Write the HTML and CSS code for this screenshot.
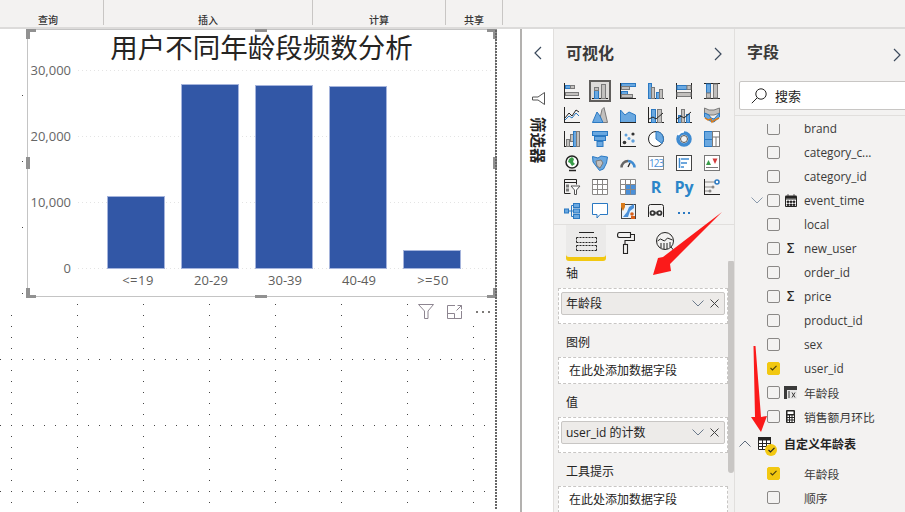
FILE: index.html
```html
<!DOCTYPE html>
<html lang="zh">
<head>
<meta charset="utf-8">
<title>Power BI</title>
<link rel="stylesheet" href="styles.css">
</head>
<body>
<header class="ribbon">
  <div class="group g-query"><span>查询</span></div>
  <div class="group g-insert"><span>插入</span></div>
  <div class="group g-calc"><span>计算</span></div>
  <div class="group g-share"><span>共享</span></div>
</header>
<main class="main">
  <section class="canvas">
    <svg class="dots" width="520" height="483">
      <defs>
        <pattern id="pv" width="66" height="11" patternUnits="userSpaceOnUse"><rect x="11" y="0" width="1" height="1" fill="#444"/></pattern>
        <pattern id="ph" width="11" height="66" patternUnits="userSpaceOnUse"><rect x="0" y="0" width="1" height="1" fill="#444"/></pattern>
      </defs>
      <rect x="60" y="275" width="420" height="208" fill="url(#pv)"/>
      <rect x="0" y="286" width="60" height="197" fill="url(#pv)"/>
      <rect x="22" y="320" width="463" height="163" fill="url(#ph)"/>
      <rect x="22" y="60" width="1" height="210" fill="url(#ph)"/>
      <rect x="0" y="330" width="1" height="1" fill="#444"/>
      <rect x="0" y="396" width="1" height="1" fill="#444"/>
      <rect x="0" y="462" width="1" height="1" fill="#444"/>
    </svg>
    <article class="visual">
      <h1 class="chart-title">用户不同年龄段频数分析</h1>
      <svg class="chart" viewBox="28 60 466 236" width="466" height="236">
        <g class="grid-lines">
          <line x1="78" x2="492" y1="70.5" y2="70.5"/>
          <line x1="78" x2="492" y1="136.5" y2="136.5"/>
          <line x1="78" x2="492" y1="202.5" y2="202.5"/>
          <line x1="78" x2="492" y1="268.5" y2="268.5"/>
        </g>
        <g class="y-labels">
          <text x="71" y="75">30,000</text>
          <text x="71" y="141">20,000</text>
          <text x="71" y="207">10,000</text>
          <text x="71" y="273">0</text>
        </g>
        <g class="bars">
          <rect x="107.5" y="196.5" width="57" height="72"/>
          <rect x="181.5" y="84.5" width="57" height="184"/>
          <rect x="255.5" y="85.5" width="57" height="183"/>
          <rect x="329.5" y="86.5" width="57" height="182"/>
          <rect x="403.5" y="250.5" width="57" height="18"/>
        </g>
        <g class="x-labels">
          <text class="wide" x="138" y="285">&lt;=19</text>
          <text x="211" y="285">20-29</text>
          <text x="285" y="285">30-39</text>
          <text x="359" y="285">40-49</text>
          <text class="wide" x="433" y="285">&gt;=50</text>
        </g>
      </svg>
      <i class="h corner tl"></i><i class="h corner tr"></i><i class="h corner bl"></i><i class="h corner br"></i>
      <i class="h mid-t"></i><i class="h mid-b"></i><i class="h mid-l"></i><i class="h mid-r"></i>
    </article>
    <div class="visual-tools">
      <svg width="16" height="15" viewBox="0 0 16 15"><path class="tool" d="M.5.5h15L10 7v7.5H6.500V7z"/></svg>
      <svg width="15" height="14" viewBox="0 0 15 14"><path class="tool" d="M8 .5H.5v13h14V6M.5 8.500h7v5M9.500 5.500l5-5M10.500.5h4v4"/></svg>
      <svg width="16" height="4" viewBox="0 0 16 4"><path d="M1 1h2v2H1zM7 1h2v2H7zM13 1h2v2h-2z" fill="#7d7a78"/></svg>
    </div>
    <div class="page-edge"></div>
  </section>

  <aside class="filter-strip">
    <svg class="chev-left" width="9" height="14" viewBox="0 0 9 14"><path d="M8 1L2 7l6 6" fill="none" stroke="#3b4a5c" stroke-width="1.200"/></svg>
    <svg class="strip-funnel" width="13" height="13" viewBox="0 0 13 13"><path d="M12.500.5v12L6 8H.5V5H6z" fill="none" stroke="#555" /></svg>
    <div class="strip-label">筛选器</div>
  </aside>

  <aside class="viz-pane">
    <div class="pane-head">
      <h2>可视化</h2>
      <svg width="9" height="14" viewBox="0 0 9 14"><path d="M1 1l6 6-6 6" fill="none" stroke="#3b4a5c" stroke-width="1.200"/></svg>
    </div>
    <div class="viz-grid">
      <!-- row 1 -->
      <span class="vi"><svg viewBox="0 0 16 16"><path class="k" d="M.5 0v16M0 15.500h16"/><rect class="b" x="1.500" y="2.500" width="5" height="3"/><rect class="g" x="6.500" y="2.500" width="4" height="3"/><rect class="g" x="1.500" y="9.500" width="13" height="3"/></svg></span>
      <span class="vi sel"><svg viewBox="0 0 16 16"><path class="k" d="M0 15.500h16"/><rect class="b" x="2.500" y="7.500" width="4" height="8"/><rect class="g" x="2.500" y="4.500" width="4" height="3"/><rect class="g" x="9.500" y="1.500" width="4" height="14"/></svg></span>
      <span class="vi"><svg viewBox="0 0 16 16"><path class="k" d="M.5 0v16M0 15.500h16"/><rect class="b" x="1.500" y=".5" width="14" height="3"/><rect class="g" x="1.500" y="3.500" width="8" height="3"/><rect class="b" x="1.500" y="8.500" width="6" height="3"/><rect class="g" x="1.500" y="11.500" width="11" height="3"/></svg></span>
      <span class="vi"><svg viewBox="0 0 16 16"><path class="k" d="M0 15.500h16"/><rect class="b" x=".5" y=".5" width="3" height="15"/><rect class="g" x="3.500" y="4.500" width="3" height="11"/><rect class="b" x="8.500" y="9.500" width="3" height="6"/><rect class="g" x="11.500" y="6.500" width="3" height="9"/></svg></span>
      <span class="vi"><svg viewBox="0 0 16 16"><path class="k" d="M.5 0v16M15.500 0v16"/><rect class="b" x="1" y="2.500" width="10" height="4"/><rect class="g" x="11" y="2.500" width="4" height="4"/><rect class="g" x="1" y="9.500" width="14" height="4"/></svg></span>
      <span class="vi"><svg viewBox="0 0 16 16"><path class="k" d="M0 .5h16M0 15.500h16"/><rect class="b" x="2.500" y="1" width="4" height="9"/><rect class="g" x="2.500" y="10" width="4" height="5"/><rect class="g" x="9.500" y="1" width="4" height="14"/></svg></span>
      <!-- row 2 -->
      <span class="vi"><svg viewBox="0 0 16 16"><path class="k" d="M.5 0v16M0 15.500h16"/><path class="k" d="M1 11l4-5 3 3 4-6 3 2"/><path class="bl" d="M1 13l4-4 3 2 4-5 3 3"/></svg></span>
      <span class="vi"><svg viewBox="0 0 16 16"><path class="g" d="M7 15.500l3-13 2-2 3.500 15z"/><path class="b" d="M.5 15.500L5 5l3 4 3 6.500z"/></svg></span>
      <span class="vi"><svg viewBox="0 0 16 16"><path class="b" d="M.5 3L5 8l4-3 6.500 3v7.500H.5z"/><path class="k" d="M0 15.500h16"/></svg></span>
      <span class="vi"><svg viewBox="0 0 16 16"><path class="k" d="M.5 0v16M0 15.500h16"/><rect class="b" x="3.500" y="2.500" width="4" height="13"/><rect class="g" x="9.500" y="2.500" width="4" height="13"/><path class="k" d="M1 12l4-2 3 2 7-6"/></svg></span>
      <span class="vi"><svg viewBox="0 0 16 16"><path class="k" d="M.5 0v16M0 15.500h16"/><rect class="b" x="2.500" y="8.500" width="3" height="7"/><rect class="g" x="5.500" y="2.500" width="3" height="13"/><rect class="b" x="10.500" y="7.500" width="3" height="8"/><path class="k" d="M1 12l4-3 3 2 7-6"/></svg></span>
      <span class="vi"><svg viewBox="0 0 16 16"><path class="g" d="M.5 1L5 3l5 0 5.500-2v5L10 8H5L.5 6z"/><path class="b" d="M.5 6l4.500 2 2 3 3 1 5.500-6v4L10 15 6 14 .5 10z"/><path d="M1 11l3 2 3-1 1 3 3-2 4-2" stroke="#d97b1a" stroke-width="1.500" fill="none"/></svg></span>
      <!-- row 3 -->
      <span class="vi"><svg viewBox="0 0 16 16"><path class="k" d="M.5 0v16M0 15.500h16"/><rect class="g" x="2.500" y="8.500" width="3" height="7"/><rect class="g" x="6.500" y="3.500" width="3" height="7"/><rect class="b" x="9.500" y=".5" width="3" height="15"/><rect class="g" x="12.500" y=".5" width="3" height="15"/></svg></span>
      <span class="vi"><svg viewBox="0 0 16 16"><rect class="b" x=".5" y=".5" width="15" height="4"/><rect class="b" x="2.500" y="5.500" width="11" height="4"/><rect class="b" x="5" y="10.500" width="6" height="5"/></svg></span>
      <span class="vi"><svg viewBox="0 0 16 16"><path class="k" d="M.5 0v16M0 15.500h16"/><circle cx="6" cy="4" r="1.500" fill="#5ea0dc"/><circle cx="13" cy="3" r="1.600" fill="#333"/><circle cx="4.500" cy="11.500" r="1.800" fill="#333"/><circle cx="9" cy="7.500" r="1.500" fill="#5ea0dc"/><circle cx="13" cy="10" r="1.700" fill="#5ea0dc"/></svg></span>
      <span class="vi"><svg viewBox="0 0 16 16"><circle cx="8" cy="8" r="7.500" fill="#fff" stroke="#252423"/><path class="b" d="M8 .5A7.500 7.500 0 0 1 14 12.500L8 8z"/></svg></span>
      <span class="vi"><svg viewBox="0 0 16 16"><circle cx="8" cy="8" r="6" fill="none" stroke="#3f8bd1" stroke-width="3.500"/><path d="M8 .5A7.500 7.500 0 0 0 2 4" fill="none" stroke="#fff" stroke-width="2"/><circle cx="8" cy="8" r="3.500" fill="#f3f2f1" stroke="#555"/></svg></span>
      <span class="vi"><svg viewBox="0 0 16 16"><rect class="b" x=".5" y=".5" width="8" height="8"/><rect class="b" x=".5" y="8.500" width="8" height="7"/><rect x="8.500" y=".5" width="7" height="15" fill="#fff" stroke="#7a7a7a"/><path d="M8.500 6h7M12 6v9.500" stroke="#7a7a7a" fill="none"/></svg></span>
      <!-- row 4 -->
      <span class="vi"><svg viewBox="0 0 16 16"><circle cx="8" cy="7" r="6" fill="#fff" stroke="#252423" stroke-width="1.500"/><path d="M5 4l3-2 2 2-1 3 2 2-3 2-2-3-2-1z" fill="#3a9d4a"/><path d="M5 15.500h7" stroke="#252423" stroke-width="1.500"/></svg></span>
      <span class="vi"><svg viewBox="0 0 16 16"><path class="b" d="M.5 1.500L6 3l3-2 6.500 1-1 6-3 6-4 1.500L4 11 1 7z"/><path class="g" d="M4 6l5-1 2 3-3 5-3-2z"/></svg></span>
      <span class="vi"><svg viewBox="0 0 16 16"><path d="M1.500 12.500A6.500 6.500 0 0 1 8 6" fill="none" stroke="#666" stroke-width="2.500"/><path d="M8 6a6.500 6.500 0 0 1 6.500 6.500" fill="none" stroke="#3f8bd1" stroke-width="2.500"/><path d="M8 12l2-4" stroke="#252423" stroke-width="1.200"/></svg></span>
      <span class="vi card"><b>123</b></span>
      <span class="vi"><svg viewBox="0 0 16 16"><rect x=".5" y=".5" width="15" height="15" fill="#fff" stroke="#444"/><path d="M3.500 3v10" stroke="#3f8bd1" stroke-width="1.500"/><path d="M5 4h8M5 8h6M5 12h3" stroke="#3f8bd1" stroke-width="1.500"/></svg></span>
      <span class="vi"><svg viewBox="0 0 16 16"><rect x=".5" y=".5" width="15" height="15" fill="#fff" stroke="#777"/><path d="M2 10l2.500-5L7 10z" fill="#3a9d4a"/><path d="M8.500 3.500h5L11 9z" fill="#d23c3c"/><path d="M2 12.500h12" stroke="#777"/></svg></span>
      <!-- row 5 -->
      <span class="vi"><svg viewBox="0 0 16 16"><path class="k" d="M.5 14.500V.5h12v5M.5 3.500h12M.5 14.500h6"/><rect class="g" x="2.500" y="6" width="2" height="2"/><rect class="g" x="2.500" y="10" width="2" height="2"/><path d="M7 7h9l-3.500 4v4.500h-2V11z" fill="#fff" stroke="#555"/></svg></span>
      <span class="vi"><svg viewBox="0 0 16 16"><path d="M.5.5h15v15H.5zM.5 5.500h15M.5 10.500h15M5.500.5v15M10.500.5v15" fill="#fff" stroke="#8a8886"/><path d="M.5 .5h15" stroke="#555"/></svg></span>
      <span class="vi"><svg viewBox="0 0 16 16"><path d="M.5.5h15v15H.5z" fill="#fff" stroke="#8a8886"/><rect x="5.500" y="5.500" width="10" height="10" fill="#4a90d9"/><path d="M.5 5.500h15M.5 10.500h15M5.500.5v15M10.500.5v15" fill="none" stroke="#8a8886"/></svg></span>
      <span class="vi txt"><b>R</b></span>
      <span class="vi txt py"><b>Py</b></span>
      <span class="vi"><svg viewBox="0 0 16 16"><path class="k" d="M.5 0v16M0 15.500h16"/><path d="M1 3h11M1 8h7M1 12h4" stroke="#8a8886" fill="none"/><circle cx="13" cy="3" r="2" fill="#fff" stroke="#2b79c2" stroke-width="1.500"/><circle cx="9" cy="8" r="1.500" fill="#8a8886"/><circle cx="6" cy="12" r="1.500" fill="#8a8886"/></svg></span>
      <!-- row 6 -->
      <span class="vi"><svg viewBox="0 0 16 16"><rect class="b" x=".5" y="6" width="4" height="4"/><rect class="b" x="9.500" y=".5" width="6" height="4"/><rect class="b" x="9.500" y="6" width="6" height="4"/><rect class="b" x="9.500" y="11.500" width="6" height="4"/><path d="M4.500 8h5M7.500 2.500v11h2M7.500 2.500h2" stroke="#2b79c2" fill="none"/></svg></span>
      <span class="vi"><svg viewBox="0 0 16 16"><path d="M.5 .5h15v11H8l-3 3.500v-3.500H.5z" fill="#fff" stroke="#2b79c2"/></svg></span>
      <span class="vi"><svg viewBox="0 0 16 16"><rect x="1.500" y="1.500" width="14" height="14" fill="#eaf3fb" stroke="#444"/><path d="M3 14l4-5 2-5 5-3v4l-4 3-2 6z" fill="#4a90d9"/><path d="M1 0h4v4L3 8 1 4z" fill="#d97b1a"/><circle cx="12" cy="11" r="1.800" fill="#d9601a"/><rect x="11" y="13" width="4" height="3" fill="#d9601a"/></svg></span>
      <span class="vi"><svg viewBox="0 0 16 16"><path class="k" d="M.5 14V3.500q0-2 2-2h11q2 0 2 2V14"/><circle cx="4.500" cy="10" r="2" fill="none" stroke="#333" stroke-width="1.700"/><circle cx="11.500" cy="10" r="2" fill="none" stroke="#333" stroke-width="1.700"/><path d="M8 8l-1 2 1 2 1-2z" fill="#333"/></svg></span>
      <span class="vi"><svg viewBox="0 0 16 16"><path d="M2 9h2v2H2zM7 9h2v2H7zM12 9h2v2h-2z" fill="#2b79c2"/></svg></span>
    </div>
    <div class="format-tabs">
      <div class="tab on"><svg width="21" height="19" viewBox="0 0 21 19"><path d="M3 .5h15" stroke="#252423" fill="none"/><path d="M.5 5.500h20M.5 10.500h20M.5 5.500v5M20.500 5.500v5M.5 13.500h20M.5 18.500h20M.5 13.500v5M20.500 13.500v5" stroke="#252423" stroke-dasharray="2 1" fill="none"/></svg></div>
      <div class="tab"><svg width="18" height="22" viewBox="0 0 18 22"><path d="M.5 3.500q0-3 2-3h11v5h-11q-2 0-2-2zM13.500 2.500h4v6H8v4" fill="none" stroke="#252423" stroke-width="1.100"/><rect x="6.500" y="12.500" width="4" height="9" fill="none" stroke="#252423" stroke-width="1.100"/></svg></div>
      <div class="tab"><svg width="20" height="24" viewBox="0 0 20 24"><circle cx="9" cy="9" r="8.500" fill="#f3f2f1" stroke="#252423"/><path d="M1.500 9l3-2 4 2 3-3 5 2" fill="none" stroke="#252423"/><path d="M5 16v-5M8 17v-6M11 17v-6M14 15v-5M15 15l5 6" stroke="#252423" fill="none"/></svg></div>
    </div>
    <div class="wells">
      <section class="well-sec">
        <h3>轴</h3>
        <div class="well"><div class="pill"><span>年龄段</span>
          <svg class="pill-chev" width="12" height="7" viewBox="0 0 12 7"><path d="M.5.5L6 6l5.500-5.500" fill="none" stroke="#6b7a8c"/></svg>
          <svg class="pill-x" width="9" height="9" viewBox="0 0 9 9"><path d="M.5.5l8 8M8.500.5l-8 8" stroke="#444"/></svg>
        </div></div>
      </section>
      <section class="well-sec">
        <h3>图例</h3>
        <div class="well empty">在此处添加数据字段</div>
      </section>
      <section class="well-sec">
        <h3>值</h3>
        <div class="well"><div class="pill"><span>user_id 的计数</span>
          <svg class="pill-chev" width="12" height="7" viewBox="0 0 12 7"><path d="M.5.5L6 6l5.500-5.500" fill="none" stroke="#6b7a8c"/></svg>
          <svg class="pill-x" width="9" height="9" viewBox="0 0 9 9"><path d="M.5.5l8 8M8.500.5l-8 8" stroke="#444"/></svg>
        </div></div>
      </section>
      <section class="well-sec">
        <h3>工具提示</h3>
        <div class="well empty">在此处添加数据字段</div>
      </section>
      <div class="scroll-thumb"></div>
    </div>
  </aside>

  <aside class="fields-pane">
    <div class="pane-head fields-head">
      <h2>字段</h2>
      <svg width="9" height="14" viewBox="0 0 9 14"><path d="M1 1l6 6-6 6" fill="none" stroke="#3b4a5c" stroke-width="1.200"/></svg>
    </div>
    <div class="search">
      <svg width="16" height="16" viewBox="0 0 16 16"><circle cx="10" cy="6" r="5.200" fill="none" stroke="#252423"/><path d="M6.300 9.700L.8 15.200" stroke="#252423" fill="none"/></svg>
      <span>搜索</span>
    </div>
    <div class="field-list">
      <div class="row first"><i></i><i class="cb"></i><i></i><span>brand</span></div>
      <div class="row"><i></i><i class="cb"></i><i></i><span>category_c...</span></div>
      <div class="row"><i></i><i class="cb"></i><i></i><span>category_id</span></div>
      <div class="row"><svg class="chev" width="12" height="7" viewBox="0 0 12 7"><path d="M.5.5L6 6l5.500-5.500" fill="none" stroke="#8a9aac"/></svg><i class="cb"></i><svg class="fi" width="12" height="13" viewBox="0 0 12 13"><path d="M.5 2.500h11v10H.5zM.5 5h11" fill="#fff" stroke="#252423"/><path d="M.5 1.500h11v3H.5z" fill="#252423"/><path d="M3 0v2M9 0v2M2 7h2v1.500H2zM5 7h2v1.500H5zM8 7h2v1.500H8zM2 10h2v1.500H2zM5 10h2v1.500H5zM8 10h2v1.500H8z" stroke="#252423" stroke-width=".7" fill="#252423"/></svg><span>event_time</span></div>
      <div class="row"><i></i><i class="cb"></i><i></i><span>local</span></div>
      <div class="row"><i></i><i class="cb"></i><em class="sigma">Σ</em><span>new_user</span></div>
      <div class="row"><i></i><i class="cb"></i><i></i><span>order_id</span></div>
      <div class="row"><i></i><i class="cb"></i><em class="sigma">Σ</em><span>price</span></div>
      <div class="row"><i></i><i class="cb"></i><i></i><span>product_id</span></div>
      <div class="row"><i></i><i class="cb"></i><i></i><span>sex</span></div>
      <div class="row"><i></i><i class="cb on"><svg width="7" height="6" viewBox="0 0 7 6"><path d="M.5 3l2 2L6.500.8" fill="none" stroke="#4a3f10" stroke-width="1.100"/></svg></i><i></i><span>user_id</span></div>
      <div class="row"><i></i><i class="cb"></i><svg class="fi" width="13" height="13" viewBox="0 0 13 13"><rect width="13" height="13" fill="#3a3a3a"/><rect x="3" y="4" width="10" height="9" fill="#e8e8e8"/><path d="M5 5v7M8 6.500l3 5M11 6.500l-3 5" stroke="#3a3a3a" fill="none"/></svg><span>年龄段</span></div>
      <div class="row"><i></i><i class="cb"></i><svg class="fi" width="9" height="13" viewBox="0 0 9 13"><rect width="9" height="13" rx="1" fill="#252423"/><path d="M1.500 1.500h6v2.500h-6zM1.500 5.500h1.500V7H1.500zM4 5.500h1.500V7H4zM6.500 5.500H8V7H6.500zM1.500 8h1.500v1.500H1.500zM4 8h1.500v1.500H4zM6.500 8H8v1.500H6.500zM1.500 10.500h1.500V12H1.500zM4 10.500h1.500V12H4zM6.500 10.500H8V12H6.500z" fill="#fff"/></svg><span>销售额月环比</span></div>
      <div class="table-row">
        <svg width="12" height="7" viewBox="0 0 12 7"><path d="M.5 6.500L6 1l5.500 5.500" fill="none" stroke="#5c6a7c"/></svg>
        <span class="table-icon"><svg width="13" height="13" viewBox="0 0 13 13"><path d="M.5.5h12v12H.5z" fill="#fff" stroke="#252423"/><path d="M0 0h13v3.500H0z" fill="#252423"/><path d="M.5 6.500h12M.5 9.500h12M4.500 3v10M8.500 3v10" stroke="#252423" fill="none"/></svg><i class="badge"><svg width="7" height="6" viewBox="0 0 7 6"><path d="M.5 3l2 2L6.500.8" fill="none" stroke="#252423" stroke-width="1.200"/></svg></i></span>
        <strong>自定义年龄表</strong>
      </div>
      <div class="row gapped"><i></i><i class="cb on"><svg width="7" height="6" viewBox="0 0 7 6"><path d="M.5 3l2 2L6.500.8" fill="none" stroke="#4a3f10" stroke-width="1.100"/></svg></i><i></i><span>年龄段</span></div>
      <div class="row"><i></i><i class="cb"></i><i></i><span>顺序</span></div>
    </div>
  </aside>
</main>
<svg class="arrows" width="905" height="512" viewBox="0 0 905 512">
  <path d="M722 212L670 264l1 7-18 4 5-17 5-1z" fill="#fb1a1a"/>
  <path d="M753.500 346h2L761 417l6-1-6 16-10-15 4 0z" fill="#fb1a1a"/>
</svg>
</body>
</html>
```
FILE: styles.css
```css
* { box-sizing: border-box; }
html, body { margin: 0; padding: 0; }
body {
  width: 905px;
  height: 512px;
  overflow: hidden;
  position: relative;
  display: flex;
  flex-direction: column;
  background: #fff;
  color: #252423;
  font-family: "Open Sans", "Noto Sans CJK SC", sans-serif;
  font-size: 12px;
}
h1, h2, h3 { margin: 0; font-weight: normal; }
i, em { font-style: normal; display: block; }

/* ribbon */
.ribbon {
  flex: 0 0 29px;
  display: flex;
  background: #f3f2f1;
  border-bottom: 2px solid #dcdbda;
  overflow: hidden;
}
.group {
  height: 25px;
  border-right: 1px solid #c8c6c4;
  display: flex;
  justify-content: center;
  align-items: flex-end;
  font-size: 10px;
  line-height: 13px;
  color: #333;
  font-weight: 500;
}
.group span { position: relative; top: 2px; }
.g-query { width: 104px; padding-right: 7px; }
.g-insert { width: 209px; }
.g-calc { width: 133px; }
.g-share { width: 57px; }

/* layout */
.main { flex: 1; display: flex; min-height: 0; }

/* canvas */
.canvas { flex: 0 0 520px; position: relative; background: #fff; }
.dots { position: absolute; left: 0; top: 0; }
.visual {
  position: absolute;
  left: 27px;
  top: 0;
  width: 469px;
  height: 268px;
  background: #fff;
  border: 1px solid #c4c4c4;
}
.chart-title {
  height: 30px;
  text-align: center;
  font-size: 27.500px;
  line-height: 36px;
  color: #252423;
  white-space: nowrap;
}
.chart { display: block; }
.grid-lines line { stroke: #e4e4e4; stroke-dasharray: 1 3; }
.y-labels text { font-size: 13px; fill: #666; text-anchor: end; }
.x-labels text { font-size: 13px; fill: #605e5c; text-anchor: middle; }
.x-labels .wide { letter-spacing: .5px; }
.bars rect { fill: #3257a6; stroke: #a5b4dc; }
.h { position: absolute; background: #919191; }
.corner { width: 10px; height: 10px; background: none; border: 0 solid #919191; }
.tl { left: -2px; top: -1px; border-width: 3px 0 0 4px; }
.tr { right: -2px; top: -1px; border-width: 3px 4px 0 0; }
.bl { left: -2px; bottom: -2px; border-width: 0 0 3px 4px; }
.br { right: -2px; bottom: -2px; border-width: 0 4px 3px 0; }
.mid-t { left: 227px; top: -1px; width: 12px; height: 3px; }
.mid-b { left: 227px; bottom: -2px; width: 12px; height: 3px; }
.mid-l { left: -2px; top: 127px; width: 4px; height: 12px; }
.mid-r { right: -2px; top: 127px; width: 4px; height: 12px; }
.visual-tools {
  position: absolute;
  left: 415px;
  top: 274px;
  width: 78px;
  height: 17px;
  padding: 0 2px 0 3px;
  background: #fff;
  display: flex;
  align-items: center;
  justify-content: space-between;
}
.tool { fill: none; stroke: #8d8590; }
.page-edge {
  position: absolute;
  left: 495px;
  top: 1px;
  width: 2px;
  height: 480px;
  background: repeating-linear-gradient(#666 0 2px, transparent 2px 3px);
}

/* filter strip */
.filter-strip {
  flex: 0 0 33px;
  border-left: 2px solid #b3b1af;
  background: #fff;
  display: flex;
  flex-direction: column;
  align-items: center;
  padding-top: 17px;
}
.strip-funnel { margin-top: 32px; margin-left: 1px; }
.strip-label {
  margin-top: 12px;
  writing-mode: vertical-rl;
  text-orientation: sideways;
  font-size: 15.500px;
  line-height: 16px;
  font-weight: 700;
  color: #252423;
}

/* visualizations pane */
.viz-pane {
  flex: 0 0 181px;
  border-left: 1px solid #e1dfdd;
  background: #f3f2f1;
  display: flex;
  flex-direction: column;
  min-height: 0;
  overflow: hidden;
}
.pane-head {
  flex: 0 0 50px;
  display: flex;
  align-items: center;
  justify-content: space-between;
  padding: 0 11px 0 12px;
}
.pane-head h2 { font-size: 16px; line-height: 24px; font-weight: 700; color: #3b3a39; position: relative; top: -1px; }
.viz-grid {
  flex: 0 0 145px;
  margin: 0;
  padding: 0 0 1px 4px;
  display: grid;
  grid-template-columns: repeat(6, 28px);
  grid-auto-rows: 24px;
  border-bottom: 1px solid #e1dfdd;
}
.vi { display: flex; align-items: center; justify-content: center; }
.vi svg { width: 16px; height: 16px; display: block; overflow: visible; }
.vi.sel { margin: 1px 3px; background: #dedcda; box-shadow: inset 0 0 0 2px #605e5c; }
.k { fill: none; stroke: #252423; }
.b { fill: #6aa8e0; stroke: #2b79c2; }
.g { fill: #c2c0be; stroke: #7a7a7a; }
.bl { fill: none; stroke: #2b79c2; }
.card b {
  width: 16px; height: 14px;
  border: 1px solid #8a8886;
  background: #fff;
  font-size: 10px; line-height: 12px;
  text-align: center; letter-spacing: -1px;
  font-weight: 400; color: #4a90d9;
}
.txt b { font-size: 16px; line-height: 18px; font-weight: 700; color: #2b86c9; }
.txt.py b { font-size: 16px; }
.format-tabs { flex: 0 0 36px; display: flex; padding-left: 12px; }
.tab {
  width: 40px;
  height: 36px;
  display: flex;
  align-items: flex-start;
  justify-content: center;
  padding-top: 7px;
}
.tab.on {
  background: #ebeae9;
  box-shadow: inset 0 -4px 0 #f2c811;
  border-radius: 0 0 3px 3px;
}
.wells {
  flex: 1;
  min-height: 0;
  position: relative;
  padding: 3px 6px 0 4px;
  overflow: hidden;
}
.well-sec { margin-bottom: 9px; width: 170px; }
.well-sec h3 { height: 19px; font-size: 12px; line-height: 20px; padding-left: 8px; margin-bottom: 5px; }
.well {
  border: 1px dashed #c8c6c4;
  background: #fff;
  padding: 3px 2px 8px;
}
.well.empty { height: 27px; padding: 0 0 0 10px; line-height: 26px; white-space: nowrap; overflow: hidden; }
.pill {
  height: 23px;
  display: flex;
  align-items: center;
  background: #edebe9;
  border: 1px solid #c8c6c4;
  border-radius: 2px;
  padding: 0 5px 0 4px;
  white-space: nowrap;
}
.pill span { flex: 1; position: relative; top: -1px; }
.pill-x { margin-left: 6px; }
.scroll-thumb {
  position: absolute;
  right: 0;
  top: -1px;
  width: 6px;
  height: 213px;
  background: #c8c6c4;
  border-radius: 3px;
}

/* fields pane */
.fields-pane {
  flex: 0 0 171px;
  background: #f3f2f1;
  border-left: 1px solid #e1dfdd;
  display: flex;
  flex-direction: column;
  min-height: 0;
  overflow: hidden;
}
.fields-head { flex-basis: 52px; padding: 0 3px 0 12px; }
.fields-head h2 { top: -3px; }
.search {
  flex: 0 0 29px;
  width: 180px;
  margin-left: 4px;
  display: flex;
  align-items: center;
  gap: 8px;
  padding-left: 11px;
  background: #fff;
  border: 1px solid #c8c6c4;
  border-radius: 2px;
  font-size: 13px;
}
.field-list {
  flex: 1;
  min-height: 0;
  margin-top: 5px;
  border-top: 1px solid #e1dfdd;
  padding-top: 9px;
  overflow: hidden;
}
.row {
  height: 24px;
  display: grid;
  grid-template-columns: 20px 13px 17px 1fr;
  align-items: center;
  padding-left: 12px;
  color: #3b3a39;
  white-space: nowrap;
}
.row.first { margin-top: -9px; clip-path: inset(8px 0 0 0); }
.row span { padding-left: 7px; font-size: 11.800px; }
.chev { justify-self: center; }
.fi { justify-self: center; margin-left: 4px; }
.sigma { justify-self: center; margin-left: 4px; font-size: 14px; line-height: 14px; font-family: "DejaVu Sans", sans-serif; color: #252423; }
.cb {
  width: 13px;
  height: 13px;
  border: 1.500px solid #8a8886;
  border-radius: 2px;
}
.cb.on {
  background: #f2c811;
  border-color: #f2c811;
  display: flex;
  align-items: center;
  justify-content: center;
}
.table-row {
  height: 31px;
  display: flex;
  align-items: center;
  padding-left: 4px;
}
.table-row strong { margin-left: 13px; font-size: 12px; font-weight: 700; color: #252423; }
.table-icon { position: relative; display: block; width: 13px; height: 13px; margin-left: 7px; }
.table-icon svg { display: block; }
.badge {
  position: absolute;
  left: 7px;
  top: 7px;
  width: 12px;
  height: 12px;
  border-radius: 50%;
  background: #f2c811;
  display: flex;
  align-items: center;
  justify-content: center;
}
.row.gapped { margin-top: 2px; }

.arrows { position: absolute; left: 0; top: 0; pointer-events: none; }
```
